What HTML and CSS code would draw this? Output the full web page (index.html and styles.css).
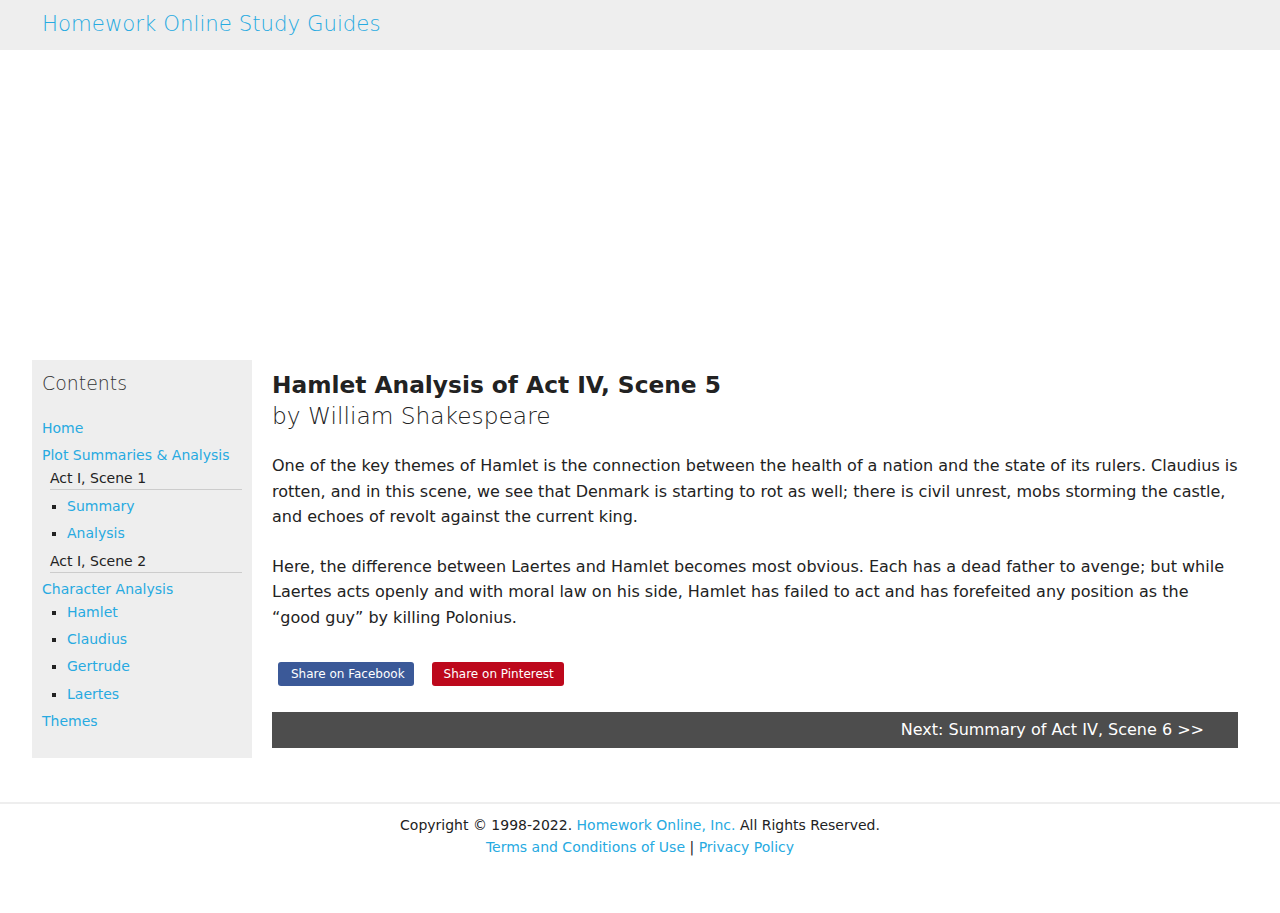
FILE: index.html
```html
<!DOCTYPE html>
<html lang="en">
<head>
<meta charset="utf-8">
<title>Hamlet Analysis of Act IV, Scene 5</title>
<link rel="stylesheet" href="styles.css">
</head>
<body>
<header class="site-header">
  <a class="brand" href="#">Homework Online Study Guides</a>
</header>
<div class="ad-space"></div>
<div class="layout">
  <aside class="sidebar">
    <h2 class="contents-title">Contents</h2>
    <ul class="toc">
      <li class="toc-top"><a href="#">Home</a></li>
      <li class="toc-top"><a href="#">Plot Summaries &amp; Analysis</a></li>
      <li class="toc-act">Act I, Scene 1</li>
      <li>
        <ul class="toc-sub">
          <li><a href="#">Summary</a></li>
          <li><a href="#">Analysis</a></li>
        </ul>
      </li>
      <li class="toc-act toc-act-2">Act I, Scene 2</li>
      <li class="toc-top toc-char"><a href="#">Character Analysis</a></li>
      <li>
        <ul class="toc-sub toc-sub-tight">
          <li><a href="#">Hamlet</a></li>
          <li><a href="#">Claudius</a></li>
          <li><a href="#">Gertrude</a></li>
          <li><a href="#">Laertes</a></li>
        </ul>
      </li>
      <li class="toc-top"><a href="#">Themes</a></li>
    </ul>
  </aside>
  <main class="content">
    <h1 class="page-title">Hamlet Analysis of Act IV, Scene 5</h1>
    <div class="byline">by William Shakespeare</div>
    <p>One of the key themes of Hamlet is the connection between the health of a nation and the state of its rulers. Claudius is rotten, and in this scene, we see that Denmark is starting to rot as well; there is civil unrest, mobs storming the castle, and echoes of revolt against the current king.</p>
    <p>Here, the difference between Laertes and Hamlet becomes most obvious. Each has a dead father to avenge; but while Laertes acts openly and with moral law on his side, Hamlet has failed to act and has forefeited any position as the “good guy” by killing Polonius.</p>
    <div class="share">
      <a class="share-btn share-fb" href="#">Share on Facebook</a>
      <a class="share-btn share-pin" href="#">Share on Pinterest</a>
    </div>
    <div class="next-bar"><a href="#">Next: Summary of Act IV, Scene 6 &gt;&gt;</a></div>
  </main>
</div>
<footer class="site-footer">
  <div>Copyright © 1998-2022. <a href="#">Homework Online, Inc.</a> All Rights Reserved.</div>
  <div><a href="#">Terms and Conditions of Use</a> | <a href="#">Privacy Policy</a></div>
</footer>
</body>
</html>
```
FILE: styles.css
```css
* { box-sizing: border-box; }
body {
  margin: 0;
  font-family: "DejaVu Sans", "Liberation Sans", sans-serif;
  color: #222;
  background: #fff;
}
a { color: #27aae1; text-decoration: none; }

.site-header {
  height: 50px;
  background: #eee;
  display: flex;
  align-items: center;
  padding-left: 42px;
  padding-bottom: 2px;
}
.brand {
  font-size: 21.3px;
  font-weight: 200;
  line-height: 1;
}

.ad-space { height: 310px; }

.layout {
  display: flex;
  gap: 20px;
  padding: 0 42px 0 32px;
  align-items: flex-start;
}

.sidebar {
  flex: 0 0 220px;
  background: #eee;
  padding: 10px 10px 23px 10px;
}
.contents-title {
  margin: 0 0 18px 0;
  font-size: 18.9px;
  font-weight: 200;
  line-height: 26px;
  color: #333;
}
.toc, .toc-sub { list-style: none; margin: 0; padding: 0; }
.toc { font-size: 14px; }
.toc-top { padding: 3.5px 0; line-height: 20px; }
.toc-act {
  margin-left: 8px;
  line-height: 20px;
  padding-bottom: 0.5px;
  border-bottom: 1px solid #ccc;
  color: #222;
}
.toc-act-2 { margin-top: 4px; padding-bottom: 1px; }
.toc-char { padding-bottom: 0; padding-top: 6px; }
.toc-sub { margin-top: 3px; padding-left: 25px; }
.toc-sub-tight { margin-top: 0; }
.toc-sub li {
  list-style: square;
  line-height: 27px;
}
.toc-sub-tight li:last-child { line-height: 28px; }

.content { flex: 1; min-width: 0; }
.page-title {
  margin: 10px 0 0 0;
  font-size: 23.3px;
  font-weight: bold;
  line-height: 30px;
  color: #222;
}
.byline {
  font-size: 23.3px;
  font-weight: 200;
  line-height: 32px;
  color: #222;
  margin-bottom: 21px;
}
.content p {
  margin: 0 0 24px 0;
  font-size: 16px;
  line-height: 25.6px;
}
.share {
  display: flex;
  gap: 18px;
  margin: 31px 0 26px 6px;
}
.share-btn {
  display: inline-block;
  height: 24px;
  line-height: 24px;
  font-size: 12px;
  color: #fff;
  border-radius: 3px;
  padding: 0 10px 0 12px;
}
.share-fb { background: #3b5998; padding-left: 13px; padding-right: 9px; }
.share-pin { background: #bd081c; }

.next-bar {
  background: #4d4d4d;
  height: 36px;
  display: flex;
  align-items: center;
  justify-content: flex-end;
  padding-right: 34px;
}
.next-bar a { color: #fff; font-size: 16px; }

.site-footer {
  margin-top: 44px;
  border-top: 2px solid #eee;
  padding-top: 10px;
  text-align: center;
  font-size: 14px;
  line-height: 22px;
  color: #222;
  padding-bottom: 45px;
}
```
